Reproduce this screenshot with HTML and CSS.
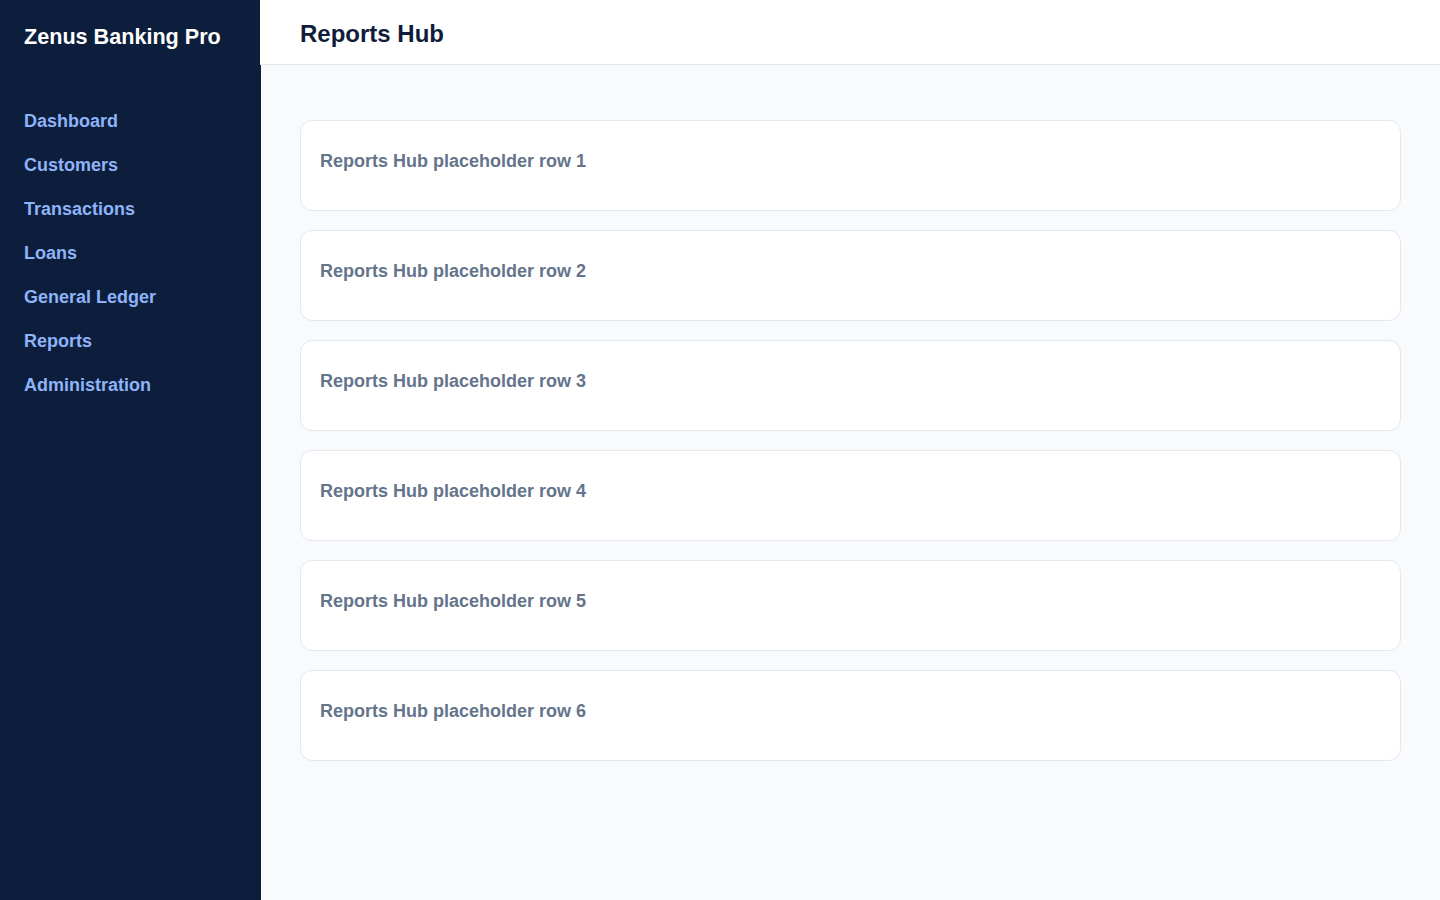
FILE: index.html
```html
<!DOCTYPE html>
<html lang="en">

<head>
    <meta charset="UTF-8">
    <meta name="viewport" content="width=device-width, initial-scale=1.0">
    <title>Reports Hub</title>
    <link rel="stylesheet" href="styles.css">
</head>

<body>
    <aside class="sidebar">
        <div class="brand">Zenus Banking Pro</div>
        <nav class="nav">
            <a href="#">Dashboard</a>
            <a href="#">Customers</a>
            <a href="#">Transactions</a>
            <a href="#">Loans</a>
            <a href="#">General Ledger</a>
            <a href="#">Reports</a>
            <a href="#">Administration</a>
        </nav>
    </aside>

    <div class="main">
        <header class="topbar">
            <h1>Reports Hub</h1>
        </header>

        <section class="content">
            <div class="card">Reports Hub placeholder row 1</div>
            <div class="card">Reports Hub placeholder row 2</div>
            <div class="card">Reports Hub placeholder row 3</div>
            <div class="card">Reports Hub placeholder row 4</div>
            <div class="card">Reports Hub placeholder row 5</div>
            <div class="card">Reports Hub placeholder row 6</div>
        </section>
    </div>
</body>

</html>
```

FILE: styles.css
```css
* {
    box-sizing: border-box;
}

body {
    margin: 0;
    display: flex;
    min-height: 100vh;
    background-color: #f8fafc;
    font-family: "Liberation Sans", Arial, sans-serif;
}

.sidebar {
    width: 261px;
    flex-shrink: 0;
    background-color: #0c1e3b;
    padding: 0 24px;
}

.brand {
    height: 74px;
    line-height: 74px;
    color: #fff;
    font-size: 21.6px;
    font-weight: bold;
}

.nav {
    display: flex;
    flex-direction: column;
    gap: 18px;
    padding-top: 34px;
}

.nav a {
    color: #8fb3f8;
    font-size: 18px;
    font-weight: bold;
    line-height: 26px;
    text-decoration: none;
}

.main {
    flex: 1;
    display: flex;
    flex-direction: column;
    margin-left: -1px;
}

.topbar {
    height: 65px;
    background-color: #fff;
    border-bottom: 1px solid #e2e8f0;
    padding: 0 40px;
}

.topbar h1 {
    margin: 0;
    line-height: 68px;
    font-size: 24px;
    color: #0f1d3a;
}

.content {
    padding: 55px 39px 40px 40px;
    display: flex;
    flex-direction: column;
    gap: 19px;
}

.card {
    height: 91px;
    background-color: #fff;
    border: 1px solid #e2e8f0;
    border-radius: 12px;
    padding: 27px 19px 0;
    color: #64748b;
    font-size: 18px;
    font-weight: bold;
    line-height: 26px;
}
```
